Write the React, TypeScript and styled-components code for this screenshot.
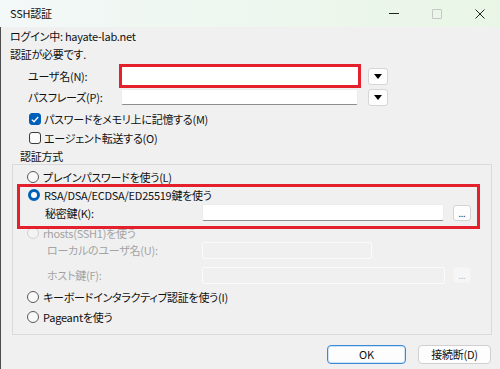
import styled, { createGlobalStyle } from "styled-components";

const GlobalStyle = createGlobalStyle`
  html, body {
    margin: 0;
    padding: 0;
    background: #f0f0f0;
  }
`;

const Window = styled.div`
  width: 500px;
  height: 369px;
  display: flex;
  flex-direction: column;
  background: #f0f0f0;
  overflow: hidden;
  font-family: "Noto Sans CJK JP", "Noto Sans", sans-serif;
  font-size: 11px;
  letter-spacing: -0.25px;
  font-feature-settings: "palt";
  color: #111;
`;

const TitleBar = styled.div`
  height: 27px;
  flex: none;
  display: flex;
  align-items: center;
  padding-left: 10px;
  background: linear-gradient(90deg, #f3f8f8 0%, #eef7ef 50%, #e9f6e6 100%);
`;

const Title = styled.div`
  flex: 1;
  line-height: 27px;
`;

const Controls = styled.div`
  display: flex;
  margin-right: -1px;
`;

const ControlButton = styled.div`
  width: 43px;
  height: 27px;
  display: flex;
  align-items: center;
  justify-content: center;
`;

const MinLine = styled.div`
  width: 10px;
  height: 1px;
  background: #222;
`;

const MaxBox = styled.div`
  width: 8px;
  height: 8px;
  border: 1px solid #c6c6c6;
  border-radius: 1px;
`;

const Body = styled.div`
  flex: 1;
  display: flex;
  flex-direction: column;
  border-left: 1px solid #4d4d4d;
  padding-left: 9px;
`;

const InfoLine = styled.div`
  height: 18px;
  line-height: 18px;
`;

const Row = styled.div<{ $h: number; $mt?: number; $pl?: number }>`
  display: flex;
  align-items: center;
  height: ${(p) => p.$h}px;
  margin-top: ${(p) => p.$mt ?? 0}px;
  padding-left: ${(p) => p.$pl ?? 0}px;
  white-space: nowrap;
`;

const Label = styled.div<{ $w: number; $disabled?: boolean }>`
  width: ${(p) => p.$w}px;
  flex: none;
  color: ${(p) => (p.$disabled ? "#a3a3a3" : "inherit")};
`;

const TextBox = styled.div<{ $w: number; $h?: number; $ml?: number; $disabled?: boolean }>`
  flex: none;
  box-sizing: border-box;
  width: ${(p) => p.$w}px;
  height: ${(p) => p.$h ?? 17}px;
  margin-left: ${(p) => p.$ml ?? 0}px;
  background: ${(p) => (p.$disabled ? "#f0f0f0" : "#fff")};
  border: 1px solid ${(p) => (p.$disabled ? "#fbfbfb" : "#ececec")};
  border-bottom-color: ${(p) => (p.$disabled ? "#fbfbfb" : "#8d8d8d")};
  border-radius: 2px;
`;

const RedTextBox = styled.div`
  flex: none;
  box-sizing: border-box;
  width: 242px;
  height: 24px;
  background: #fff;
  border: 3px solid #e3202b;
`;

const DropButton = styled.div<{ $ml: number }>`
  flex: none;
  box-sizing: border-box;
  width: 20px;
  height: 17px;
  margin-left: ${(p) => p.$ml}px;
  background: #fdfdfd;
  border: 1px solid #d6d6d6;
  border-radius: 3px;
  display: flex;
  align-items: center;
  justify-content: center;
  &::after {
    content: "";
    border-left: 4px solid transparent;
    border-right: 4px solid transparent;
    border-top: 5px solid #000;
  }
`;

const DotsButton = styled.div<{ $ml: number; $disabled?: boolean }>`
  flex: none;
  box-sizing: border-box;
  width: 18px;
  height: 16px;
  margin-left: ${(p) => p.$ml}px;
  background: ${(p) => (p.$disabled ? "#f6f6f6" : "#fdfdfd")};
  border: 1px solid ${(p) => (p.$disabled ? "#f3f3f3" : "#d3d3d3")};
  border-radius: 3px;
  color: ${(p) => (p.$disabled ? "#bcbcbc" : "#333")};
  font-size: 9px;
  line-height: 16px;
  text-align: center;
`;

const CheckBox = styled.div<{ $checked?: boolean }>`
  flex: none;
  box-sizing: border-box;
  width: 12px;
  height: 12px;
  margin-right: 3px;
  border-radius: 3px;
  border: 1px solid ${(p) => (p.$checked ? "#005fb8" : "#3a3a3a")};
  background: ${(p) => (p.$checked ? "#005fb8" : "#fbfbfb")};
  display: flex;
  align-items: center;
  justify-content: center;
`;

const Radio = styled.div<{ $checked?: boolean; $disabled?: boolean }>`
  flex: none;
  box-sizing: border-box;
  width: 12px;
  height: 12px;
  margin-right: 4px;
  border-radius: 50%;
  border: ${(p) => (p.$checked ? "3px solid #005fb8" : `1px solid ${p.$disabled ? "#d2d2d2" : "#5a5a5a"}`)};
  background: ${(p) => (p.$checked ? "#fff" : p.$disabled ? "#f3f3f3" : "#f9f9f9")};
`;

const Legend = styled.div`
  height: 16px;
  line-height: 16px;
  margin-top: 1px;
  padding-left: 10px;
`;

const Group = styled.div`
  margin-left: 2px;
  width: 480px;
  box-sizing: border-box;
  border: 1px solid #dadada;
  padding: 3px 0 8px 4px;
  display: flex;
  flex-direction: column;
`;

const Highlight = styled.div`
  position: relative;
  z-index: 1;
  box-sizing: border-box;
  width: 463px;
  margin-top: -2px;
  border: 3px solid #e3202b;
  padding-bottom: 4px;
`;

const Muted = styled.span`
  color: #a3a3a3;
`;

const Footer = styled.div`
  display: flex;
  justify-content: flex-end;
  gap: 12px;
  margin-top: 10px;
  padding-right: 9px;
`;

const Button = styled.div<{ $w: number; $primary?: boolean }>`
  box-sizing: border-box;
  width: ${(p) => p.$w}px;
  height: 19px;
  line-height: 17px;
  text-align: center;
  background: #fdfdfd;
  border: 1px solid ${(p) => (p.$primary ? "#3c8ad6" : "#d0d0d0")};
  box-shadow: ${(p) => (p.$primary ? "inset 0 0 0 1px #cfe3f6" : "none")};
  border-radius: 4px;
`;

export default function App() {
  return (
    <Window>
      <GlobalStyle />
      <TitleBar>
        <Title>SSH認証</Title>
        <Controls>
          <ControlButton>
            <MinLine />
          </ControlButton>
          <ControlButton>
            <MaxBox />
          </ControlButton>
          <ControlButton>
            <svg width="10" height="10" viewBox="0 0 10 10">
              <path d="M0.5 0.5 L9.5 9.5 M9.5 0.5 L0.5 9.5" stroke="#222" strokeWidth="1" />
            </svg>
          </ControlButton>
        </Controls>
      </TitleBar>
      <Body>
        <InfoLine>ログイン中: hayate-lab.net</InfoLine>
        <InfoLine>認証が必要です.</InfoLine>

        <Row $h={24} $mt={1} $pl={18}>
          <Label $w={91}>ユーザ名(N):</Label>
          <RedTextBox />
          <DropButton $ml={7} />
        </Row>
        <Row $h={18} $pl={18}>
          <Label $w={91}>パスフレーズ(P):</Label>
          <TextBox $w={237} $h={16} $ml={2} />
          <DropButton $ml={10} />
        </Row>

        <Row $h={18} $mt={4} $pl={19}>
          <CheckBox $checked>
            <svg width="8" height="7" viewBox="0 0 8 7">
              <path d="M0.8 3.6 L3 5.8 L7.2 1" stroke="#fff" strokeWidth="1.3" fill="none" />
            </svg>
          </CheckBox>
          パスワードをメモリ上に記憶する(M)
        </Row>
        <Row $h={18} $mt={1} $pl={19}>
          <CheckBox />
          エージェント転送する(O)
        </Row>

        <Legend>認証方式</Legend>
        <Group>
          <Row $h={18} $pl={10}>
            <Radio />
            プレインパスワードを使う(L)
          </Row>
          <Highlight>
            <Row $h={16} $pl={8}>
              <Radio $checked />
              RSA/DSA/ECDSA/ED25519鍵を使う
            </Row>
            <Row $h={19} $pl={25}>
              <Label $w={157}>秘密鍵(K):</Label>
              <TextBox $w={242} />
              <DotsButton $ml={9}>...</DotsButton>
            </Row>
          </Highlight>
          <Row $h={16} $mt={-4} $pl={10}>
            <Radio $disabled />
            <Muted>rhosts(SSH1)を使う</Muted>
          </Row>
          <Row $h={18} $pl={30}>
            <Label $w={155} $disabled>
              ローカルのユーザ名(U):
            </Label>
            <TextBox $w={170} $disabled />
          </Row>
          <Row $h={18} $mt={7} $pl={30}>
            <Label $w={155} $disabled>
              ホスト鍵(F):
            </Label>
            <TextBox $w={243} $disabled />
            <DotsButton $ml={8} $disabled>
              ...
            </DotsButton>
          </Row>
          <Row $h={18} $mt={4} $pl={10}>
            <Radio />
            キーボードインタラクティブ認証を使う(I)
          </Row>
          <Row $h={18} $mt={2} $pl={10}>
            <Radio />
            Pageantを使う
          </Row>
        </Group>

        <Footer>
          <Button $w={79} $primary>
            OK
          </Button>
          <Button $w={73}>接続断(D)</Button>
        </Footer>
      </Body>
    </Window>
  );
}
